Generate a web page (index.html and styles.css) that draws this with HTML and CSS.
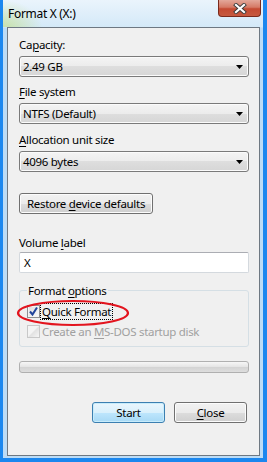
FILE: index.html
```html
<!DOCTYPE html>
<html lang="en">
<head>
  <meta charset="UTF-8" />
  <title>Format X (X:)</title>
  <link rel="stylesheet" href="styles.css">
</head>
<body>
  <div class="window">
    <div class="titlebar">
      <span class="title">Format X (X:)</span>
      <div class="close-btn">
        <svg width="14" height="11" viewBox="0 0 14 11">
          <path d="M3 2 L11 9 M11 2 L3 9" stroke="#3c3c3c" stroke-width="4" stroke-linecap="square"/>
          <path d="M3 2 L11 9 M11 2 L3 9" stroke="#fff" stroke-width="2.2" stroke-linecap="square"/>
        </svg>
      </div>
    </div>

    <div class="client">
      <div class="label">Ca<u>p</u>acity:</div>
      <div class="combo">
        <span>2.49 GB</span>
        <svg class="arrow" width="7" height="4" viewBox="0 0 7 4"><path d="M0 0 H7 L3.5 4 Z" fill="#000"/></svg>
      </div>

      <div class="label"><u>F</u>ile system</div>
      <div class="combo">
        <span>NTFS (Default)</span>
        <svg class="arrow" width="7" height="4" viewBox="0 0 7 4"><path d="M0 0 H7 L3.5 4 Z" fill="#000"/></svg>
      </div>

      <div class="label third"><u>A</u>llocation unit size</div>
      <div class="combo">
        <span>4096 bytes</span>
        <svg class="arrow" width="7" height="4" viewBox="0 0 7 4"><path d="M0 0 H7 L3.5 4 Z" fill="#000"/></svg>
      </div>

      <div class="button restore">Restore <u>d</u>evice defaults</div>

      <div class="label volume">Volume <u>l</u>abel</div>
      <div class="textbox">X</div>

      <fieldset class="options">
        <legend>Format <u>o</u>ptions</legend>
        <div class="check-row">
          <span class="checkbox checked">
            <svg width="11" height="11" viewBox="0 0 11 11"><path d="M2 5.5 L4.5 8.5 L9 1.5" stroke="#21449a" stroke-width="2" fill="none"/></svg>
          </span>
          <span class="focus-text"><u>Q</u>uick Format</span>
          <svg class="ring" width="114" height="28" viewBox="0 0 114 28">
            <ellipse cx="57" cy="14" rx="55" ry="12" fill="none" stroke="#e3141e" stroke-width="2.2"/>
          </svg>
        </div>
        <div class="check-row disabled">
          <span class="checkbox off"></span>
          <span class="plain-text">Create an <u>M</u>S-DOS startup disk</span>
        </div>
      </fieldset>

      <div class="progress"></div>

      <div class="actions">
        <div class="button default">Start</div>
        <div class="button"><u>C</u>lose</div>
      </div>
    </div>
  </div>
</body>
</html>
```

FILE: styles.css
```css
body {
  margin: 0;
  font-family: "Noto Sans", "Liberation Sans", sans-serif;
  font-size: 11.5px;
  letter-spacing: -0.3px;
  color: #000;
}
u {
  text-decoration-thickness: 1px;
  text-underline-offset: 2px;
}
.window {
  width: 267px;
  height: 462px;
  box-sizing: border-box;
  border: solid #1b87ef;
  border-width: 0 4px 4px 3px;
  background: linear-gradient(180deg, #e6f2fb 0, #d3e8f8 27px, #bcdcf6 28px, #bcdcf6 100%);
  display: flex;
  flex-direction: column;
}
.titlebar {
  height: 27px;
  display: flex;
  justify-content: space-between;
  align-items: flex-start;
  background: radial-gradient(ellipse 40px 30px at 0 30px, rgba(190, 220, 110, 0.6), rgba(190, 220, 110, 0)),
              linear-gradient(180deg, #eaf4fc, #d4e9f8);
}
.title {
  padding: 6px 0 0 5px;
  line-height: 15px;
  font-size: 12px;
  color: #000;
}
.close-btn {
  width: 43px;
  height: 17px;
  margin-right: 2px;
  box-sizing: border-box;
  border: 1px solid #7a2a1c;
  border-top: 0;
  border-radius: 0 0 4px 4px;
  background: linear-gradient(180deg, #e3a89a 0, #d57a66 45%, #c44a32 55%, #c65a40 100%);
  display: flex;
  align-items: center;
  justify-content: center;
}
.client {
  flex: 1;
  margin: 0 3px 2px 4px;
  border: 1px solid #6e7882;
  background: #f0f0f0;
  padding: 9px 10px 0 11px;
  display: flex;
  flex-direction: column;
  align-items: flex-start;
}
.label {
  line-height: 15px;
  margin-top: 7px;
}
.label:first-child {
  margin-top: 0;
}
.label.third {
  margin-top: 8px;
}
.combo {
  margin-top: 4px;
  width: 230px;
  height: 21px;
  box-sizing: border-box;
  border: 1px solid #7a7a7a;
  border-radius: 3px;
  padding: 0 5px 0 3px;
  background: linear-gradient(180deg, #f4f4f4 0, #ececec 50%, #dedede 50%, #d6d6d6 100%);
  box-shadow: inset 0 0 0 1px #fbfbfb;
  display: flex;
  align-items: center;
  justify-content: space-between;
  line-height: 19px;
}
.button {
  height: 21px;
  box-sizing: border-box;
  border: 1px solid #707070;
  border-radius: 3px;
  background: linear-gradient(180deg, #f2f2f2 0, #ebebeb 50%, #dddddd 50%, #cfcfcf 100%);
  box-shadow: inset 0 0 0 1px #fcfcfc;
  text-align: center;
  line-height: 19px;
}
.restore {
  margin-top: 21px;
  width: 134px;
}
.label.volume {
  margin-top: 21px;
}
.textbox {
  margin-top: 2px;
  width: 230px;
  height: 21px;
  box-sizing: border-box;
  border: 1px solid #d4d9de;
  border-top-color: #abadb3;
  border-radius: 2px;
  background: #fff;
  padding-left: 4px;
  line-height: 19px;
}
.options {
  margin: 10px 0 0;
  width: 230px;
  box-sizing: border-box;
  border: 1px solid #d5dfe5;
  border-radius: 3px;
  padding: 6px 0 7px 7px;
  min-width: 0;
}
.options legend {
  padding: 0 1px;
  margin-left: 0;
  line-height: 15px;
}
.check-row {
  position: relative;
  display: flex;
  align-items: center;
  height: 15px;
}
.check-row + .check-row {
  margin-top: 5px;
}
.checkbox {
  width: 13px;
  height: 13px;
  box-sizing: border-box;
  border: 1px solid #8f8f8f;
  background: linear-gradient(135deg, #dcdcdc, #fbfbfb);
  display: flex;
  align-items: center;
  justify-content: center;
  margin-right: 1px;
}
.checkbox.checked {
  box-shadow: inset 0 0 0 1px #f4f4f4;
}
.checkbox.off {
  border-color: #c8c8c8;
  background: linear-gradient(135deg, #f4f4f4 0, #f4f4f4 45%, #e2e2e2 55%, #f6f6f6 100%);
}
.focus-text {
  outline: 1px dotted #000;
  outline-offset: 0;
  padding: 0 1px;
  line-height: 15px;
}
.plain-text {
  padding-left: 1px;
  line-height: 15px;
}
.disabled {
  color: #a0a0a0;
}
.ring {
  position: absolute;
  left: -11px;
  top: -5px;
}
.progress {
  margin-top: 14px;
  width: 230px;
  height: 12px;
  box-sizing: border-box;
  border: 1px solid #b0b0b0;
  border-radius: 3px;
  background: linear-gradient(180deg, #f6f6f6 0, #e6e6e6 45%, #d4d4d4 55%, #dedede 100%);
}
.actions {
  margin-top: 29px;
  align-self: stretch;
  display: flex;
  justify-content: flex-end;
  gap: 9px;
  padding-right: 2px;
}
.actions .button {
  width: 73px;
}
.button.default {
  border-color: #3c7fb1;
  background: linear-gradient(180deg, #eaf6fd 0, #d9f0fc 50%, #bee6fd 50%, #a7d9f5 100%);
  box-shadow: inset 0 0 0 1px #c8ecfb;
}
```
